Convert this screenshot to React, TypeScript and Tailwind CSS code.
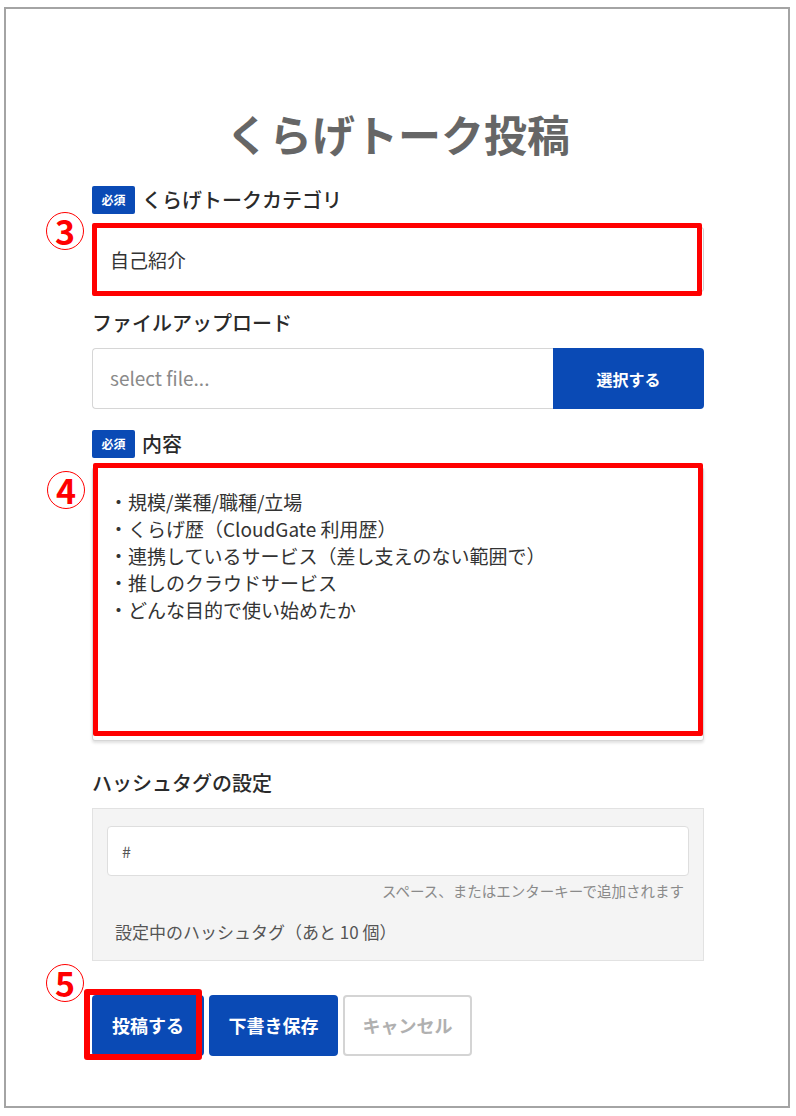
import React from 'react';

const FONT = { fontFamily: '"Noto Sans CJK JP", "Noto Sans", sans-serif' };

function Required() {
  return (
    <span className="inline-flex h-[28px] w-[43px] items-center justify-center rounded-[2px] bg-[#0a4ab5] text-[12px] font-bold text-white">
      必須
    </span>
  );
}

function Marker({ n, className }: { n: string; className: string }) {
  return (
    <span
      className={
        'absolute flex h-[38px] w-[38px] items-center justify-center rounded-full border-[1.5px] border-[#ff0000] text-[34px] font-bold leading-none text-[#ff0000] ' +
        className
      }
    >
      {n}
    </span>
  );
}

const CONTENT = [
  '・規模/業種/職種/立場',
  '・くらげ歴（CloudGate 利用歴）',
  '・連携しているサービス（差し支えのない範囲で）',
  '・推しのクラウドサービス',
  '・どんな目的で使い始めたか',
].join('\n');

export default function App() {
  return (
    <div className="h-[1116px] w-[796px] bg-white pl-[4px] pt-[7px]" style={FONT}>
      <div className="h-[1101px] w-[786px] border-2 border-[#a4a4a4] pt-[100px]">
        <div className="ml-[86px] flex w-[612px] flex-col">
          <h1 className="h-[48px] text-center text-[43px] font-bold leading-[48px] text-[#666666]">
            くらげトーク投稿
          </h1>

          <div className="mt-[29px] flex h-[28px] items-center gap-[7px]">
            <Required />
            <span className="text-[20px] font-medium text-[#2a2a2a]">くらげトークカテゴリ</span>
          </div>

          <div className="relative mt-[13px]">
            <input
              readOnly
              defaultValue="自己紹介"
              className="h-[65px] w-full rounded-[3px] border border-[#cfcfcf] bg-white px-[17px] text-[19px] text-[#333333] outline-none"
            />
            <div className="absolute -top-[4px] -bottom-[4px] left-0 right-[2px] rounded-[2px] border-[5px] border-[#ff0000]" />
            <Marker n="3" className="-left-[46px] -top-[15px]" />
          </div>

          <div className="mt-[17px] flex h-[28px] items-center">
            <span className="text-[20px] font-medium text-[#2a2a2a]">ファイルアップロード</span>
          </div>

          <div className="mt-[11px] flex h-[61px] w-full">
            <div className="flex flex-1 items-center rounded-l-[4px] border border-r-0 border-[#d6d6d6] px-[17px] text-[19px] text-[#8a8a8a]">
              select file...
            </div>
            <button className="w-[151px] rounded-r-[4px] bg-[#0a4ab5] text-[16px] font-bold text-white">
              選択する
            </button>
          </div>

          <div className="mt-[21px] flex h-[28px] items-center gap-[7px]">
            <Required />
            <span className="text-[20px] font-medium text-[#2a2a2a]">内容</span>
          </div>

          <div className="relative mt-[9px]">
            <textarea
              readOnly
              defaultValue={CONTENT}
              className="block h-[274px] w-full resize-none rounded-[3px] border border-[#d6d6d6] bg-white px-[16px] pt-[20px] text-[19px] leading-[27px] text-[#333333] shadow-[0_2px_3px_rgba(0,0,0,0.12)] outline-none"
            />
            <div className="absolute -top-[4px] bottom-[5px] left-[1px] right-[1px] rounded-[2px] border-[5px] border-[#ff0000]" />
            <Marker n="4" className="-left-[45px] top-[4px]" />
          </div>

          <div className="mt-[28px] flex h-[28px] items-center">
            <span className="text-[20px] font-medium text-[#2a2a2a]">ハッシュタグの設定</span>
          </div>

          <div className="mt-[11px] flex h-[153px] flex-col border border-[#e2e2e2] bg-[#f4f4f4] px-[14px] pt-[17px]">
            <input
              readOnly
              defaultValue="#"
              className="h-[50px] w-full rounded-[4px] border border-[#dedede] bg-white px-[14px] text-[16px] text-[#555555] outline-none"
            />
            <div className="mt-[6px] h-[18px] pr-[5px] text-right text-[14.5px] leading-[18px] text-[#8a8a8a]">
              スペース、またはエンターキーで追加されます
            </div>
            <div className="mt-[22px] h-[20px] pl-[8px] text-[17px] leading-[20px] text-[#555555]">
              設定中のハッシュタグ（あと 10 個）
            </div>
          </div>

          <div className="mt-[34px] flex gap-[5px]">
            <div className="relative">
              <button className="h-[61px] w-[112px] rounded-[4px] bg-[#0a4ab5] text-[18px] font-bold text-white">
                投稿する
              </button>
              <div className="absolute -top-[6px] -bottom-[4px] -left-[8px] right-[2px] rounded-[3px] border-[6px] border-[#ff0000]" />
              <Marker n="5" className="-left-[46px] -top-[31px]" />
            </div>
            <button className="h-[61px] w-[129px] rounded-[4px] bg-[#0a4ab5] text-[18px] font-bold text-white">
              下書き保存
            </button>
            <button className="h-[61px] w-[129px] rounded-[4px] border-2 border-[#d4d4d4] bg-white text-[18px] font-bold text-[#b0b0b0]">
              キャンセル
            </button>
          </div>
        </div>
      </div>
    </div>
  );
}
